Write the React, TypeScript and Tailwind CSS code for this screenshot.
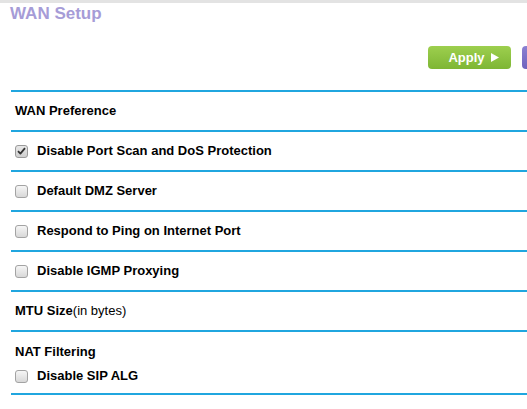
import React from "react";

function Check({ checked }: { checked?: boolean }) {
  return (
    <span
      className={
        checked
          ? "relative inline-flex h-[13px] w-[13px] shrink-0 items-center justify-center rounded-[3px] border border-[#9a9a9a] bg-gradient-to-b from-[#e8e8e8] to-[#cfcfcf]"
          : "relative inline-flex h-[13px] w-[13px] shrink-0 items-center justify-center rounded-[3px] border border-[#a3a3a3] bg-gradient-to-b from-[#f6f6f6] to-[#d8d8d8]"
      }
    >
      {checked && (
        <svg width="9" height="8" viewBox="0 0 9 8" className="block">
          <path d="M1 4.2 L3.4 6.6 L8 1.2" fill="none" stroke="#333" strokeWidth="1.8" strokeLinejoin="round" />
        </svg>
      )}
    </span>
  );
}

function Row({ children }: { children: React.ReactNode }) {
  return (
    <div className="flex h-[40px] items-center border-t-2 border-[#20a6df] pl-[4px]">{children}</div>
  );
}

function CheckRow({ label, checked }: { label: string; checked?: boolean }) {
  return (
    <Row>
      <div className="flex items-center gap-[9px]">
        <Check checked={checked} />
        <span className="text-[13px] font-bold leading-[18px]">{label}</span>
      </div>
    </Row>
  );
}

export default function App() {
  return (
    <div
      className="h-[409px] w-[527px] overflow-hidden bg-white text-black"
      style={{ fontFamily: '"Liberation Sans", Arial, sans-serif' }}
    >
      <div className="w-[620px]">
        <div className="h-[3px] bg-[#e3e3e3]" />
        <h1 className="pl-[10px] pt-[1px] text-[17px] font-bold leading-[20px] text-[#a69cd7]">WAN Setup</h1>

        <div className="mt-[22px] flex h-[23px] justify-end gap-[11px] pr-[15px]">
          <button className="flex h-[23px] w-[83px] items-center justify-center gap-[6px] rounded-[4px] bg-gradient-to-b from-[#9dcf4e] to-[#7eb634] pl-[8px] text-[13px] font-bold text-white">
            <span>Apply</span>
            <svg width="8" height="9" viewBox="0 0 8 9">
              <path d="M0 0 L8 4.5 L0 9 Z" fill="#fff" />
            </svg>
          </button>
          <button className="h-[23px] w-[83px] rounded-[4px] bg-gradient-to-b from-[#8b80d2] to-[#6f63bd]" />
        </div>

        <div className="ml-[11px] mt-[21px]">
          <Row>
            <span className="text-[13px] font-bold leading-[18px]">WAN Preference</span>
          </Row>
          <CheckRow label="Disable Port Scan and DoS Protection" checked />
          <CheckRow label="Default DMZ Server" />
          <CheckRow label="Respond to Ping on Internet Port" />
          <CheckRow label="Disable IGMP Proxying" />
          <Row>
            <span className="text-[13px] leading-[18px]">
              <span className="font-bold">MTU Size</span>(in bytes)
            </span>
          </Row>
          <div className="border-t-2 border-[#20a6df] pb-[8px] pl-[4px] pt-[11px]">
            <div className="text-[13px] font-bold leading-[18px]">NAT Filtering</div>
            <div className="mt-[6px] flex items-center gap-[9px]">
              <Check />
              <span className="text-[13px] font-bold leading-[18px]">Disable SIP ALG</span>
            </div>
          </div>
          <div className="border-t-2 border-[#20a6df]" />
        </div>
      </div>
    </div>
  );
}
